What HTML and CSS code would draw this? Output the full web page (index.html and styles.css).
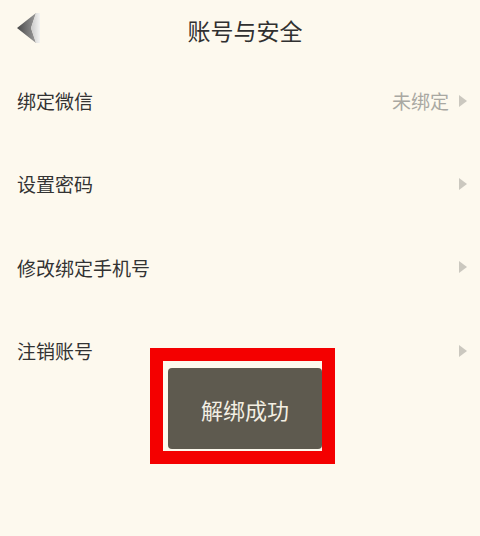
FILE: index.html
```html
<!DOCTYPE html>
<html lang="zh">
<head>
<meta charset="utf-8">
<link rel="stylesheet" href="styles.css">
</head>
<body>
<div class="page">
  <header class="topbar">
    <svg class="back" width="24" height="32" viewBox="0 0 24 32">
      <defs>
        <linearGradient id="gd" x1="0" y1="0" x2="1" y2="0">
          <stop offset="0" stop-color="#4a4a4a"/>
          <stop offset="1" stop-color="#9a9a9a"/>
        </linearGradient>
        <linearGradient id="gl" x1="0" y1="0" x2="1" y2="0">
          <stop offset="0" stop-color="#c9c9c9"/>
          <stop offset="1" stop-color="#f4f4f2"/>
        </linearGradient>
      </defs>
      <polygon points="0,16 19,1 14,16 19,31" fill="url(#gd)"/>
      <polygon points="19,1 23,1 23,31 19,31 14,16" fill="url(#gl)"/>
    </svg>
    <h1 class="title">账号与安全</h1>
  </header>
  <ul class="list">
    <li class="row"><span class="label">绑定微信</span><span class="right"><span class="value">未绑定</span><span class="tri"></span></span></li>
    <li class="row"><span class="label">设置密码</span><span class="right"><span class="tri"></span></span></li>
    <li class="row"><span class="label">修改绑定手机号</span><span class="right"><span class="tri"></span></span></li>
    <li class="row"><span class="label">注销账号</span><span class="right"><span class="tri"></span></span></li>
  </ul>
  <div class="toast">解绑成功</div>
  <div class="mark"></div>
</div>
</body>
</html>
```

FILE: styles.css
```css
html, body {
  margin: 0;
  padding: 0;
  background: #fdf9ee;
}
.page {
  position: relative;
  width: 480px;
  height: 536px;
  overflow: hidden;
  font-family: "Noto Sans CJK SC", "Noto Sans", sans-serif;
  color: #333;
}
.topbar {
  position: relative;
  height: 59px;
  display: flex;
  align-items: center;
  justify-content: center;
}
.back {
  position: absolute;
  left: 17px;
  top: 12px;
}
.title {
  margin: 0;
  font-size: 23px;
  font-weight: 400;
  color: #303030;
  padding-left: 10px;
  padding-top: 1px;
}
.list {
  list-style: none;
  margin: 0;
  padding: 0;
}
.row {
  height: 83.3px;
  display: flex;
  align-items: center;
  justify-content: space-between;
  padding: 0 13px 0 17px;
}
.label {
  font-size: 19px;
  color: #333;
}
.right {
  display: flex;
  align-items: center;
  gap: 10px;
}
.value {
  font-size: 19px;
  color: #a9a8a2;
}
.tri {
  width: 0;
  height: 0;
  border-top: 6px solid transparent;
  border-bottom: 6px solid transparent;
  border-left: 8px solid #cbc8bf;
}
.toast {
  position: absolute;
  left: 168px;
  top: 368px;
  width: 154px;
  height: 81px;
  background: #5e5a4f;
  border-radius: 4px;
  color: #f3efe3;
  font-size: 22px;
  display: flex;
  align-items: center;
  justify-content: center;
  padding-left: 0;
}
.mark {
  position: absolute;
  left: 150px;
  top: 348px;
  width: 185px;
  height: 116px;
  box-sizing: border-box;
  border: 13px solid #f40000;
}
```
